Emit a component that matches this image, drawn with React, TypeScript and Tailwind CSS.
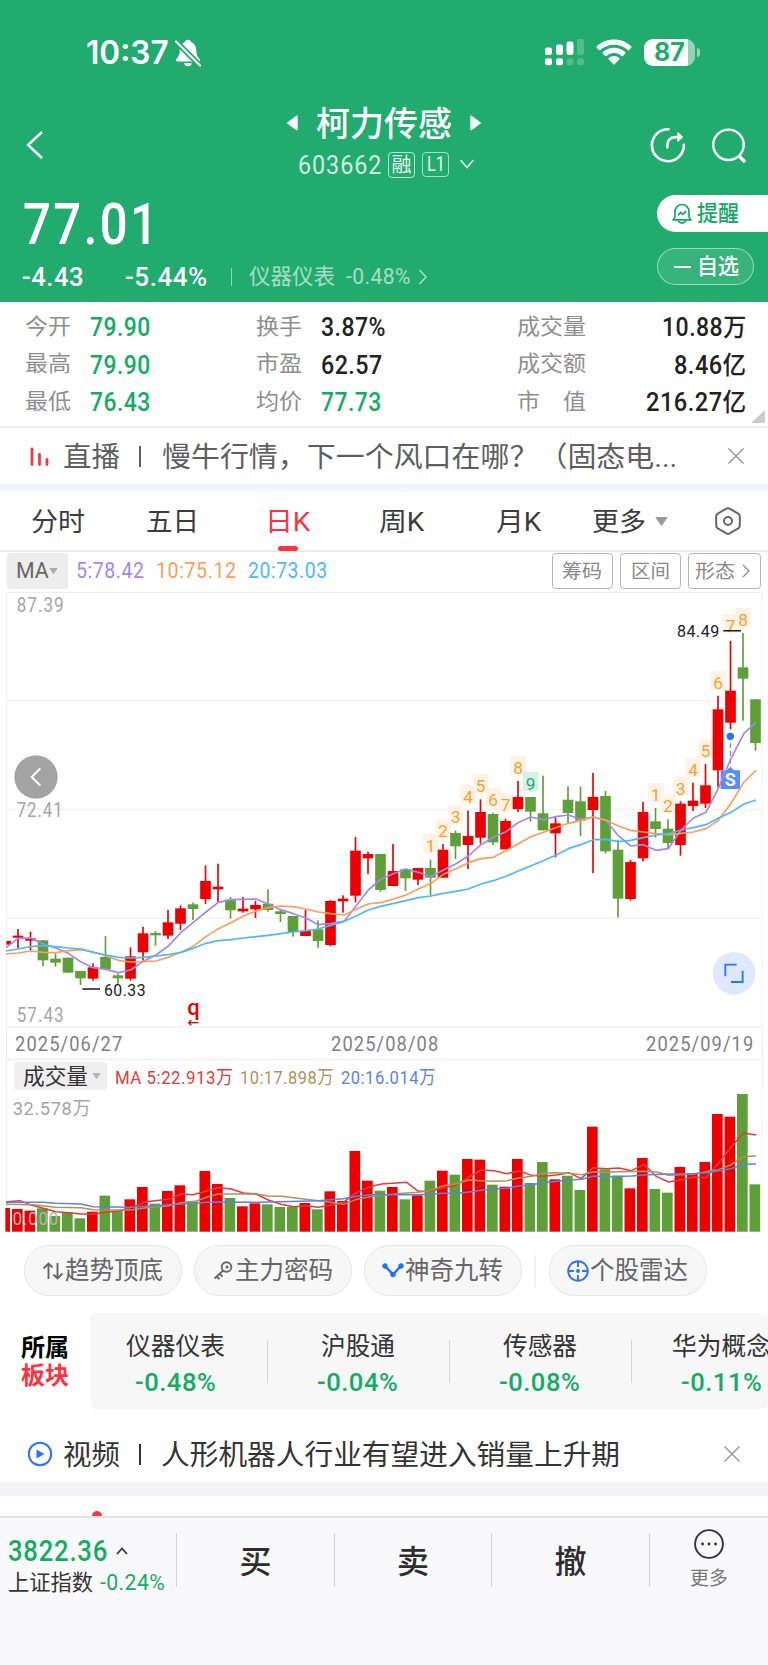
import { useLayoutEffect, useRef, type ReactNode } from "react";
import clsx from "clsx";

/* Text that is stretched or squeezed to the width given by its w-* class. */
function Fit({ className, children }: { className: string; children: ReactNode }) {
  const outer = useRef<HTMLSpanElement>(null);
  const inner = useRef<HTMLSpanElement>(null);
  useLayoutEffect(() => {
    const fit = () => {
      if (!outer.current || !inner.current) return;
      const natural = inner.current.offsetWidth;
      if (natural > 0) inner.current.style.transform = `scaleX(${outer.current.clientWidth / natural})`;
    };
    fit();
    document.fonts?.ready.then(fit);
  }, []);
  return (
    <span ref={outer} className={clsx("block shrink-0 whitespace-nowrap leading-none", className)}>
      <span ref={inner} className="inline-block origin-left">
        {children}
      </span>
    </span>
  );
}

/* [rising, high, bodyTop, bodyBottom, low, volumeTop], three units to a pixel */
type Candle = [0 | 1, number, number, number, number, number];
const candles: Candle[] = [
  [1, 1053, 1053, 1064, 1064, 564], [1, 1017, 1037, 1043, 1075, 567], [1, 1025, 1045, 1052, 1080, 572],
  [0, 1051, 1051, 1111, 1129, 565], [0, 1090, 1106, 1118, 1130, 588], [0, 1103, 1103, 1148, 1148, 577],
  [0, 1143, 1143, 1165, 1185, 595], [1, 1120, 1132, 1166, 1172, 575], [0, 1038, 1101, 1138, 1138, 527],
  [0, 1150, 1156, 1165, 1182, 572], [1, 1072, 1099, 1166, 1172, 538], [1, 1010, 1030, 1087, 1112, 501],
  [0, 1023, 1029, 1036, 1067, 551], [1, 960, 997, 1037, 1047, 513], [1, 946, 955, 1001, 1020, 496],
  [0, 938, 943, 957, 990, 544], [1, 826, 873, 927, 942, 453], [1, 821, 890, 898, 937, 492],
  [0, 921, 929, 961, 986, 534], [1, 921, 956, 964, 968, 559], [1, 933, 945, 958, 984, 550],
  [0, 898, 941, 960, 965, 553], [0, 958, 964, 972, 996, 561], [0, 978, 978, 1026, 1040, 561],
  [1, 960, 1022, 1038, 1038, 549], [0, 991, 1018, 1053, 1073, 568], [1, 930, 933, 1065, 1069, 514],
  [1, 916, 926, 934, 968, 543], [1, 741, 782, 917, 937, 393], [1, 785, 792, 805, 852, 482],
  [0, 792, 792, 900, 905, 512], [1, 762, 843, 888, 888, 501], [0, 835, 838, 865, 903, 538],
  [1, 834, 834, 869, 885, 526], [0, 809, 834, 863, 916, 482], [1, 762, 779, 863, 863, 452],
  [0, 722, 729, 769, 807, 464], [1, 662, 738, 765, 837, 417], [1, 628, 666, 743, 761, 419],
  [0, 668, 672, 757, 765, 494], [1, 686, 693, 778, 778, 500], [1, 573, 621, 657, 666, 417],
  [0, 621, 621, 665, 695, 489], [0, 557, 670, 721, 721, 426], [1, 682, 700, 730, 802, 478],
  [0, 589, 629, 669, 700, 467], [0, 590, 634, 692, 738, 510], [1, 549, 621, 660, 849, 320],
  [0, 603, 618, 784, 790, 448], [0, 749, 779, 926, 982, 467], [1, 809, 816, 927, 932, 505],
  [1, 636, 666, 805, 814, 414], [0, 654, 694, 717, 743, 507], [0, 688, 716, 759, 775, 518],
  [1, 634, 641, 765, 797, 441], [1, 578, 632, 648, 663, 460], [1, 522, 586, 641, 654, 426],
  [1, 317, 358, 541, 592, 282], [1, 153, 302, 398, 418, 290], [0, 129, 232, 266, 392, 222],
  [0, 328, 328, 459, 482, 493],
];
const cx = (i: number) => 54 + 37.5 * (i - 1);

const ma5 =
  "18,1073 54,1045 92,1044 130,1062 167,1074 205,1090 243,1116 280,1133 318,1138 355,1148 392,1140 430,1114 468,1095 505,1068 543,1027 580,997 618,966 655,937 693,929 730,928 768,927 804,942 842,959 880,971 918,984 955,1004 992,1001 1033,993 1068,948 1105,900 1142,868 1180,851 1218,837 1255,847 1293,860 1330,840 1367,822 1405,798 1443,764 1480,742 1518,725 1554,698 1592,681 1630,690 1667,680 1705,675 1742,688 1780,681 1818,692 1855,737 1892,768 1930,764 1968,781 2005,776 2043,720 2080,684 2118,667 2155,595 2193,505 2232,430 2268,397";
const ma10 =
  "18,1092 54,1089 92,1083 130,1087 167,1088 205,1082 243,1079 280,1086 318,1098 355,1111 392,1116 430,1115 468,1113 505,1102 543,1087 580,1069 618,1040 655,1016 693,998 730,978 768,963 804,953 842,948 880,950 918,957 955,966 992,971 1033,975 1068,958 1105,942 1146,937 1180,927 1218,915 1255,897 1293,880 1330,853 1367,837 1405,818 1443,806 1480,802 1518,782 1554,762 1592,740 1630,727 1667,713 1705,700 1742,692 1780,681 1818,690 1855,708 1892,721 1930,726 1968,731 2005,734 2043,730 2080,726 2118,716 2155,691 2193,640 2232,576 2268,541";
const ma20 =
  "18,1083 54,1077 92,1070 130,1067 167,1070 205,1074 243,1077 280,1087 318,1095 355,1102 392,1104 430,1102 468,1098 505,1094 543,1087 580,1075 618,1060 655,1052 693,1049 730,1044 804,1036 842,1031 880,1026 918,1022 955,1017 992,1006 1033,994 1068,978 1105,960 1142,949 1218,932 1255,923 1293,918 1330,910 1367,904 1405,897 1443,882 1480,872 1518,859 1560,841 1592,828 1630,812 1667,796 1705,776 1742,764 1780,749 1818,748 1855,755 1892,751 1930,743 1968,735 2005,731 2043,720 2080,713 2118,704 2155,685 2193,667 2232,642 2268,630";
const vol5 =
  "18,545 60,542 90,554 130,565 167,575 205,578 243,582 280,582 318,577 355,573 392,563 440,545 505,538 543,522 580,524 618,514 655,503 693,507 730,519 768,522 805,540 843,553 880,560 918,557 955,562 990,556 1030,547 1070,517 1110,500 1145,492 1220,487 1255,514 1290,514 1330,503 1368,496 1405,472 1443,450 1482,452 1520,461 1558,453 1595,466 1630,469 1670,465 1707,458 1743,476 1780,443 1820,446 1857,444 1894,452 1932,433 1970,470 2006,486 2043,480 2080,471 2118,473 2155,430 2192,383 2230,339 2268,345";
const vol10 =
  "18,553 100,554 167,562 243,563 280,569 392,570 440,563 505,558 543,548 590,543 618,532 655,522 768,522 805,528 843,529 918,538 955,542 990,547 1030,553 1070,538 1110,530 1145,526 1210,520 1255,517 1290,512 1330,497 1370,491 1407,480 1445,482 1482,484 1520,482 1555,474 1595,469 1630,460 1665,458 1707,460 1745,464 1782,455 1820,457 1857,455 1930,454 1970,456 2006,466 2043,464 2080,463 2118,455 2155,449 2192,435 2230,410 2268,408";
const vol20 =
  "18,547 130,547 167,550 243,552 280,560 392,562 440,559 505,554 590,550 618,547 655,546 768,547 843,545 955,542 990,539 1030,536 1070,529 1110,524 1255,524 1290,523 1330,520 1380,519 1407,516 1445,511 1482,507 1520,505 1555,498 1595,494 1630,488 1707,480 1745,478 1782,468 1820,470 1895,468 1930,465 2006,462 2080,461 2118,458 2155,453 2192,446 2230,433 2268,432";

/* [candle, digit, centre] */
const counts: [number, string, number][] = [
  [34, "1", 769], [35, "2", 724], [36, "3", 682], [37, "4", 622], [38, "5", 588], [39, "6", 630],
  [40, "7", 645], [41, "8", 534], [42, "9", 582], [52, "1", 616], [53, "2", 649], [54, "3", 596],
  [55, "4", 540], [56, "5", 484], [57, "6", 279], [58, "7", 109], [59, "8", 91],
];

const RED = "#ec0000";
const GREEN = "#5f9f3a";

function PriceChart() {
  return (
    <svg viewBox="0 0 2304 1317" className="block h-[439px] w-[768px]" fontFamily="Roboto">
      <g stroke="#ececec" strokeWidth="3" fill="none">
        <path d="M18 7H2286M18 331H2286M18 658H2286M18 985H2286M18 1311H2286" />
        <path d="M19 7V1317M2286 7V1317" stroke="#f1f1f1" />
      </g>
      <g fill="#a5a5a5" fontSize="58" letterSpacing="3.5">
        <text x="50" y="66" textLength="144" lengthAdjust="spacingAndGlyphs">87.39</text>
        <text x="50" y="681" textLength="141" lengthAdjust="spacingAndGlyphs">72.41</text>
        <text x="50" y="1297" textLength="144" lengthAdjust="spacingAndGlyphs">57.43</text>
      </g>
      {counts.map(([i, d, y]) => (
        <path
          key={i}
          d={`M${cx(i) - 23} ${y - 37}h47v57h-17l-7 7l-7 -7h-16z`}
          fill={d === "9" ? "#d4f1e4" : "#fef3e6"}
        />
      ))}
      {candles.map(([up, hi, top, bottom, lo], i) => {
        const x = cx(i);
        return i === 0 ? (
          <rect key={i} x="19" y={top} width="14" height={bottom - top} fill={RED} />
        ) : (
          <g key={i} fill={up ? RED : GREEN}>
            <rect x={x - 2.5} y={hi} width="5" height={lo - hi} />
            <rect x={x - 16} y={top} width="32" height={bottom - top} />
          </g>
        );
      })}
      <path d="M2191 460V530" stroke="#4a86f7" strokeWidth="3.5" strokeDasharray="14 9" />
      <circle cx="2191" cy="439" r="11" fill="#2271fb" />
      <path d="M2162 541h19l10-11l10 11h19v56h-58z" fill="#548ef8" />
      <g fill="none" strokeWidth="5" strokeLinejoin="round">
        <polyline points={ma5} stroke="#a287ee" />
        <polyline points={ma10} stroke="#fc9d5c" />
        <polyline points={ma20} stroke="#4cb9fb" />
      </g>
      <text x="2191" y="588" textAnchor="middle" fontSize="54" fontWeight="700" fill="#fff">S</text>
      <g fontSize="52" textAnchor="middle">
        {counts.map(([i, d, y]) => (
          <text key={i} x={cx(i)} y={y + 18} fill={d === "9" ? "#1cad69" : "#f9a12c"}>
            {d}
          </text>
        ))}
      </g>
      <g fill="#1b1b1b" fontSize="52" letterSpacing="1.5">
        <text x="312" y="1218" textLength="126" lengthAdjust="spacingAndGlyphs">60.33</text>
        <text x="2031" y="142" textLength="128" lengthAdjust="spacingAndGlyphs">84.49</text>
      </g>
      <path d="M247 1197H300M2170 122H2223" stroke="#1b1b1b" strokeWidth="4.5" />
      <text x="562" y="1275" fontSize="66" fontWeight="500" fill={RED}>q</text>
      <path d="M596 1298H567M574 1290l-8 8l8 8" stroke={RED} strokeWidth="4" fill="none" />
      <circle cx="108" cy="561" r="65" fill="#a3a3a3" />
      <path d="M121 535L95 561L121 587" stroke="#fff" strokeWidth="6" fill="none" />
      <circle cx="2202" cy="1150" r="64" fill="#dee9ff" />
      <path d="M2210 1124H2176V1159M2228 1142V1176H2193" stroke="#2a73fa" strokeWidth="5.5" fill="none" />
    </svg>
  );
}

function VolumeChart() {
  return (
    <svg viewBox="0 210 2304 429" className="block h-[143px] w-[768px]" fontFamily="Roboto, 'Noto Sans CJK SC'">
      <path d="M19 210V636M2286 210V636" stroke="#f1f1f1" strokeWidth="3" />
      <path d="M18 635H2286" stroke="#ececec" strokeWidth="3" />
      <text x="38" y="284" fontSize="57" letterSpacing="2" fill="#a5a5a5" textLength="236" lengthAdjust="spacingAndGlyphs">32.578万</text>
      {candles.map(([up, , , , , top], i) =>
        i === 0 ? (
          <rect key={i} x="16" y={top} width="14" height={635 - top} fill={RED} />
        ) : (
          <rect key={i} x={cx(i) - 18} y={top} width="32" height={635 - top} fill={up ? RED : GREEN} />
        ),
      )}
      <g fill="none" strokeWidth="4.5" strokeLinejoin="round">
        <polyline points={vol5} stroke="#e23b3c" />
        <polyline points={vol10} stroke="#b2905a" />
        <polyline points={vol20} stroke="#5f80e4" />
      </g>
      <text x="38" y="615" fontSize="56" letterSpacing="3" fill="#b5b5b5" textLength="139" lengthAdjust="spacingAndGlyphs">0.000</text>
    </svg>
  );
}

function Caret({ className }: { className: string }) {
  return (
    <svg viewBox="0 0 12 9" className={clsx("shrink-0", className)} fill="currentColor">
      <path d="M.5 0h11a.5.5 0 0 1 .4.8L6.500 8.600a.6.6 0 0 1-1 0L.1.8A.5.5 0 0 1 .5 0z" />
    </svg>
  );
}

function Close({ className }: { className: string }) {
  return (
    <svg viewBox="0 0 16 16" className={clsx("size-4 shrink-0", className)} stroke="#999" strokeWidth="1.5">
      <path d="M.5.5l15 15M15.5.5l-15 15" />
    </svg>
  );
}

function StatusBar() {
  return (
    <div className="flex h-[104px] items-center pt-[2px]">
      <Fit className="ml-[86px] w-[83px] font-[Inter] text-[32px] font-semibold">10:37</Fit>
      <svg viewBox="0 0 26 28" className="ml-[6px] h-7 w-[26px]">
        <path d="M13 .8c1.500 0 2.600.9 3.100 2.200 3.200 1.200 4.900 4 5.100 7.800.2 5 1.100 6.800 3.500 9.300.9 1 .5 2.500-1.200 2.500H2.500c-1.700 0-2.100-1.500-1.200-2.500C3.700 17.600 4.600 15.800 4.800 10.800c.2-3.800 1.900-6.600 5.100-7.800C10.400 1.700 11.500.8 13 .8zM9 24.300h8c-.5 2-2 3-4 3s-3.500-1-4-3z" fill="#fff" />
        <path d="M-1.500 0L27 28.500" stroke="#21ab6e" strokeWidth="5.500" />
        <path d="M1 2.500L25 26.500" stroke="#fff" strokeWidth="2.100" strokeLinecap="round" />
      </svg>
      <svg viewBox="0 0 40 28" className="ml-[343px] h-7 w-10" fill="#fff">
        <rect x="1" y="8.500" width="7" height="7.500" rx="2.300" />
        <rect x="12" y="5.500" width="7" height="10.500" rx="2.300" />
        <rect x="22.500" y="2.500" width="7" height="13.500" rx="2.300" />
        <rect x="33" y="-.3" width="7" height="16.300" rx="2.300" opacity=".22" />
        <rect x="1" y="19.300" width="7" height="7" rx="2.300" />
        <rect x="12" y="19.300" width="7" height="7" rx="2.300" />
        <rect x="22.500" y="19.300" width="7" height="7" rx="2.300" opacity=".22" />
        <rect x="33" y="19.300" width="7" height="7" rx="2.300" opacity=".22" />
      </svg>
      <svg viewBox="0 0 36 26" className="mb-[2px] ml-[12px] h-[26px] w-9" fill="#fff">
        <path d="M18 .5c6.700 0 12.800 2.600 17.300 6.800.4.400.4 1 0 1.400l-2.200 2.300c-.4.400-1 .4-1.400 0C28.100 7.700 23.300 5.700 18 5.700S7.900 7.700 4.300 11c-.4.400-1 .4-1.400 0L.7 8.700c-.4-.4-.4-1 0-1.400C5.200 3.100 11.300.5 18 .5z" />
        <path d="M18 8.800c4.300 0 8.200 1.600 11.200 4.300.4.400.4 1 0 1.400L26.900 17c-.4.400-1 .4-1.400 0-2-1.800-4.600-2.900-7.500-2.900s-5.500 1.100-7.500 2.900c-.4.400-1 .4-1.400 0l-2.300-2.500c-.4-.4-.4-1 0-1.400 3-2.700 6.900-4.300 11.200-4.300z" />
        <path d="M18 17c2 0 3.900.7 5.300 2 .4.400.4 1 0 1.400l-4.600 4.800c-.4.400-1 .4-1.400 0l-4.600-4.800c-.4-.4-.4-1 0-1.400 1.400-1.300 3.300-2 5.300-2z" />
      </svg>
      <div className="mb-[2px] ml-[12px] flex h-[27px] w-[51px] items-center justify-center rounded-[9px] bg-[linear-gradient(90deg,#fff_87%,#90d5b7_87%)]">
        <Fit className="w-[31px] font-[Inter] text-[25px] font-bold text-[#21ab6e]">87</Fit>
      </div>
      <div className="mb-[2px] ml-[2px] h-[9px] w-[3px] rounded-r-full bg-white/50" />
    </div>
  );
}

function Header() {
  return (
    <header className="h-[302px] shrink-0 bg-[#21ab6e] text-white">
      <StatusBar />
      <div className="flex h-[82px] items-center">
        <svg viewBox="0 0 18 28" className="ml-[26px] h-7 w-[18px]" fill="none" stroke="#fff" strokeWidth="2.400">
          <path d="M16 1L2 14l14 13" />
        </svg>
        <div className="ml-[243px] flex w-[194px] flex-col self-stretch">
          <div className="flex h-[38px] items-center">
            <svg viewBox="0 0 11 16" className="h-4 w-[11px]" fill="#fff">
              <path d="M10.700 1.500v13c0 .9-1 1.200-1.600.6L.5 8.800a1 1 0 0 1 0-1.500L9.100.9c.6-.6 1.600-.3 1.600.6z" />
            </svg>
            <Fit className="mt-[2px] ml-[18px] w-[136px] text-[34px] font-medium">柯力传感</Fit>
            <svg viewBox="0 0 11 16" className="ml-[18px] h-4 w-[11px]" fill="#fff">
              <path d="M.3 1.500v13c0 .9 1 1.200 1.600.6l8.600-6.300a1 1 0 0 0 0-1.500L1.900.9C1.300.3.3.6.3 1.500z" />
            </svg>
          </div>
          <div className="flex h-[44px] items-center pl-[11px]">
            <Fit className="mt-[3px] w-[84px] text-[25px] tracking-[0.04em] opacity-80">603662</Fit>
            <div className="mt-[2px] ml-[6px] flex h-[26px] w-[27px] shrink-0 items-center justify-center rounded-[4px] border-[1.500px] border-white/70">
              <Fit className="w-[20px] text-[20px] opacity-90">融</Fit>
            </div>
            <div className="mt-[1px] ml-[7px] flex h-[25px] w-[27px] shrink-0 items-center justify-center rounded-[4px] border-[1.500px] border-white/60">
              <Fit className="w-[18px] text-[21px] opacity-90">L1</Fit>
            </div>
            <svg viewBox="0 0 16 10" className="ml-[10px] h-[10px] w-4 shrink-0" fill="none" stroke="#fff" strokeWidth="1.600">
              <path d="M1.500 1L8 8.500L14.500 1" opacity=".85" />
            </svg>
          </div>
        </div>
        <svg viewBox="0 0 36 36" className="ml-[169px] size-9" fill="none" stroke="#fff" strokeWidth="2.600">
          <path d="M18.500 2.200A16 16 0 1 0 33.900 17.800" strokeLinecap="round" />
          <path d="M17.300 20.500V18.500c0-5.500 3.300-8.400 8.600-8.400h3.500" strokeLinecap="round" />
          <path d="M28 6l4.200 3.900l-4.200 4z" fill="#fff" strokeWidth="1.400" strokeLinejoin="round" />
        </svg>
        <svg viewBox="0 0 36 36" className="ml-[25px] size-9" fill="none" stroke="#fff" strokeWidth="2.400">
          <circle cx="17.500" cy="17.800" r="15.200" />
          <path d="M28.500 29.500l4.500 4.500" strokeWidth="3.400" strokeLinecap="round" />
        </svg>
      </div>
      <div className="flex justify-between">
        <div className="flex flex-col">
          <div className="flex h-[75px] items-center">
            <Fit className="ml-[23px] w-[137px] text-[58px] font-medium tracking-[0.05em]">77.01</Fit>
          </div>
          <div className="flex h-[31px] items-center">
            <Fit className="ml-[22px] w-[62px] text-[26px] font-medium tracking-[0.02em]">-4.43</Fit>
            <Fit className="ml-[41px] w-[83px] text-[26px] font-medium tracking-[0.02em]">-5.44%</Fit>
            <div className="ml-[23px] h-[18px] w-px bg-white/50" />
            <Fit className="ml-[17px] w-[86px] text-[22px] opacity-60">仪器仪表</Fit>
            <Fit className="ml-[11px] w-[65px] text-[22px] tracking-[0.02em] opacity-60">-0.48%</Fit>
            <svg viewBox="0 0 10 18" className="ml-[7px] h-[16px] w-[10px]" fill="none" stroke="#fff" strokeWidth="1.600" opacity=".65">
              <path d="M1 1l7.500 8L1 17" />
            </svg>
          </div>
        </div>
        <div className="mt-[9px] flex w-[111px] flex-col gap-[16px]">
          <div className="flex h-[37px] items-center rounded-l-full bg-white text-[#14a866]">
            <svg viewBox="0 0 20 21" className="ml-[15px] h-[21px] w-5" fill="none" stroke="currentColor" strokeWidth="1.700">
              <path d="M1 16.800h18c-1.200-1-2-1.800-2-3V8.500a7 7 0 0 0-14 0v5.300c0 1.200-.8 2-2 3z" strokeLinejoin="round" />
              <path d="M6 18.200q4 3.600 8 0" />
              <path d="M6 12.300l2.700-2.800l2.300 1.800l3-3.100" />
            </svg>
            <Fit className="ml-[5px] w-[42px] text-[22px] font-medium">提醒</Fit>
          </div>
          <div className="flex h-[37px] w-[97px] items-center rounded-full border border-white/50 bg-white/10">
            <div className="ml-[16px] h-[2px] w-[17px] bg-white" />
            <Fit className="ml-[6px] w-[42px] text-[22px] font-medium">自选</Fit>
          </div>
        </div>
      </div>
    </header>
  );
}

const GREEN_TXT = "text-[#12ad63]";

function Stat({ label, labelW, value, valueClass }: { label: string; labelW: string; value: string; valueClass: string }) {
  return (
    <div className="flex h-[37.500px] items-center">
      <Fit className={clsx("text-[22px] text-[#8e8e8e]", labelW)}>{label}</Fit>
      <Fit className={clsx("mt-[2px] text-[25.500px] font-medium tracking-[0.02em]", valueClass)}>{value}</Fit>
    </div>
  );
}

function Stats() {
  return (
    <section className="flex h-[126px] shrink-0 border-b-2 border-[#f0f0f0] bg-white pt-[6px]">
      <div className="ml-[25px] w-[231px]">
        <Stat label="今开" labelW="w-[46px]" value="79.90" valueClass={clsx("ml-[19px] w-[61px]", GREEN_TXT)} />
        <Stat label="最高" labelW="w-[46px]" value="79.90" valueClass={clsx("ml-[19px] w-[61px]", GREEN_TXT)} />
        <Stat label="最低" labelW="w-[46px]" value="76.43" valueClass={clsx("ml-[19px] w-[61px]", GREEN_TXT)} />
      </div>
      <div className="w-[261px]">
        <Stat label="换手" labelW="w-[46px]" value="3.87%" valueClass="ml-[19px] w-[65px] text-[#222]" />
        <Stat label="市盈" labelW="w-[46px]" value="62.57" valueClass="ml-[19px] w-[62px] text-[#222]" />
        <Stat label="均价" labelW="w-[46px]" value="77.73" valueClass={clsx("ml-[19px] w-[61px]", GREEN_TXT)} />
      </div>
      <div className="w-[230px]">
        <Stat label="成交量" labelW="w-[69px]" value="10.88万" valueClass="ml-auto w-[85px] text-[#222]" />
        <Stat label="成交额" labelW="w-[69px]" value="8.46亿" valueClass="ml-auto w-[73px] text-[#222]" />
        <Stat label="市　值" labelW="w-[69px]" value="216.27亿" valueClass="ml-auto w-[101px] text-[#222]" />
      </div>
      <svg viewBox="0 0 14 13" className="mb-[3px] ml-[4px] h-[13px] w-[14px] self-end" fill="#ccc">
        <path d="M14 0v13H0z" />
      </svg>
    </section>
  );
}

function Tabs() {
  return (
    <nav className="flex h-[61px] shrink-0 items-center border-b-2 border-[#eaeaea] bg-white pt-[2px] text-[26px] text-[#3c3c3c]">
      <Fit className="ml-[31px] w-[54px]">分时</Fit>
      <Fit className="ml-[61px] w-[53px]">五日</Fit>
      <div className="relative -mt-[2px] ml-[66px] flex h-[61px] items-center pt-[2px] text-[#fd3440]">
        <Fit className="w-[45px]">日K</Fit>
        <span className="absolute bottom-0 left-[13px] h-[5px] w-5 rounded-[2.500px] bg-[#fd3440]" />
      </div>
      <Fit className="ml-[69px] w-[45px]">周K</Fit>
      <Fit className="ml-[72px] w-[45px]">月K</Fit>
      <Fit className="ml-[51px] w-[54px]">更多</Fit>
      <Caret className="ml-[9px] h-[9px] w-[13px] text-[#999]" />
      <svg viewBox="0 0 26 28" className="mb-[2px] ml-[47px] h-7 w-[26px]" fill="none" stroke="#666" strokeWidth="2">
        <path d="M13 1.200q.9 0 1.600.4l8.600 5q1.600 1 1.600 2.700v9.400q0 1.700-1.600 2.700l-8.600 5q-1.600.8-3.200 0l-8.600-5q-1.600-1-1.600-2.700V9.300q0-1.700 1.600-2.700l8.600-5q.7-.4 1.600-.4z" />
        <circle cx="13" cy="14" r="4" />
      </svg>
    </nav>
  );
}

function Indicators() {
  const box = "flex h-[36px] shrink-0 items-center rounded-[4px] border border-[#b5b5b5] text-[19px] text-[#888]";
  return (
    <div className="flex h-[38px] shrink-0 items-center bg-white text-[22px]">
      <div className="ml-[7px] flex h-[36px] w-[61px] items-center rounded-[3px] bg-[#ededed] text-[#666]">
        <Fit className="ml-[9px] w-[33px]">MA</Fit>
        <Caret className="ml-0 h-[6px] w-[9px] text-[#aaa]" />
      </div>
      <Fit className="ml-[8px] w-[69px] tracking-[0.03em] text-[#a287ee]">5:78.42</Fit>
      <Fit className="ml-[11px] w-[81px] tracking-[0.03em] text-[#fc9d5c]">10:75.12</Fit>
      <Fit className="ml-[11px] w-[80px] tracking-[0.03em] text-[#4cb9fb]">20:73.03</Fit>
      <div className={clsx(box, "ml-[224px] w-[61px]")}>
        <Fit className="ml-[9px] w-[40px]">筹码</Fit>
      </div>
      <div className={clsx(box, "ml-[7px] w-[61px]")}>
        <Fit className="ml-[10px] w-[39px]">区间</Fit>
      </div>
      <div className={clsx(box, "ml-[7px] w-[73px]")}>
        <Fit className="ml-[6px] w-[40px]">形态</Fit>
        <svg viewBox="0 0 8 14" className="ml-[7px] h-[14px] w-2" fill="none" stroke="#888" strokeWidth="1.200">
          <path d="M1 1l6 6l-6 6" />
        </svg>
      </div>
    </div>
  );
}

function Sector({ name, nameW, value, first }: { name: string; nameW: string; value: string; first?: boolean }) {
  return (
    <div className="flex w-[182px] shrink-0 items-center">
      <div className={clsx("h-[43px] w-px", !first && "bg-[#d5d5d5]")} />
      <div className="ml-[-2px] flex flex-1 flex-col items-center gap-[10px] pt-[7px]">
        <Fit className={clsx("text-[25px] text-[#333]", nameW)}>{name}</Fit>
        <Fit className={clsx("w-[81px] text-[26.500px] font-medium tracking-[0.02em]", GREEN_TXT)}>{value}</Fit>
      </div>
    </div>
  );
}

function Pill({ icon, children, className }: { icon: ReactNode; children: string; className: string }) {
  return (
    <div className={clsx("flex h-[51px] w-[158px] shrink-0 items-center rounded-[25px] border border-[#e6e6e6] bg-[#f7f7f7] text-[#666]", className)}>
      <span className="ml-[16px] flex w-[24px] shrink-0 justify-center">{icon}</span>
      <Fit className="w-[98px] text-[25px]">{children}</Fit>
    </div>
  );
}

function Tools() {
  return (
    <div className="flex h-[79px] shrink-0 items-center bg-white pb-[2px]">
      <Pill
        className="ml-[24px]"
        icon={
          <svg viewBox="0 0 22 18" className="h-[18px] w-[22px]" fill="none" stroke="currentColor" strokeWidth="1.900">
            <path d="M6.500 17V1.500M1.500 6.500l5-5l4 4M15.500 1v15.500M11.500 12.500l4 4l5-5" />
          </svg>
        }
      >
        趋势顶底
      </Pill>
      <Pill
        className="ml-[12px]"
        icon={
          <svg viewBox="0 0 20 19" className="h-[19px] w-5" fill="none" stroke="currentColor" strokeWidth="1.900">
            <circle cx="13.500" cy="6" r="4.800" />
            <path d="M10.200 9.500L1.500 17.500M3.500 15.500l3 2.500M6.500 12.800l3 2.800" />
            <circle cx="14" cy="6" r=".6" />
          </svg>
        }
      >
        主力密码
      </Pill>
      <Pill
        className="ml-[12px]"
        icon={
          <svg viewBox="0 0 22 15" className="h-[15px] w-[22px]" fill="#1f72ff" stroke="#1f72ff">
            <path d="M3.500 3.500L11 11.500L18.500 3.500" fill="none" strokeWidth="2.400" />
            <circle cx="3" cy="3" r="2.300" />
            <circle cx="19" cy="3" r="2.300" />
            <circle cx="11" cy="11.600" r="2.300" />
          </svg>
        }
      >
        神奇九转
      </Pill>
      <div className="ml-[13px] h-[32px] w-px bg-[#ececec]" />
      <Pill
        className="ml-[13px]"
        icon={
          <svg viewBox="0 0 22 22" className="size-[22px]" fill="none" stroke="#2b74f5" strokeWidth="1.900">
            <circle cx="11" cy="11" r="9.800" />
            <path d="M11 1v6M11 15V21M1 11h6M15 11H21" />
            <circle cx="11" cy="11" r="1" fill="#2b74f5" />
          </svg>
        }
      >
        个股雷达
      </Pill>
    </div>
  );
}

function BottomBar() {
  const sep = "h-[54px] w-px shrink-0 bg-[#d3d3d6]";
  return (
    <footer className="flex h-[149px] shrink-0 items-start border-t-2 border-[#e3e4e6] bg-[#f9f9fb] pt-[15px]">
      <div className="flex w-[176px] shrink-0 flex-col pl-[8px]">
        <div className="flex h-[36px] items-center">
          <Fit className={clsx("w-[100px] text-[29px] font-medium tracking-[0.03em]", GREEN_TXT)}>3822.36</Fit>
          <svg viewBox="0 0 12 8" className="ml-[8px] h-2 w-3" fill="none" stroke="#333" strokeWidth="1.800">
            <path d="M1 7l5-5.500L11 7" />
          </svg>
        </div>
        <div className="flex h-[28px] items-center">
          <Fit className="w-[85px] text-[21.500px] text-[#333]">上证指数</Fit>
          <Fit className={clsx("ml-[7px] w-[65px] text-[21.500px] tracking-[0.02em]", GREEN_TXT)}>-0.24%</Fit>
        </div>
      </div>
      <div className={sep} />
      <div className="flex h-[57px] w-[157px] items-center justify-center text-[#2d2d2d]">
        <Fit className="w-[32px] text-[32px] font-medium">买</Fit>
      </div>
      <div className={sep} />
      <div className="flex h-[57px] w-[156px] items-center justify-center text-[#2d2d2d]">
        <Fit className="w-[32px] text-[32px] font-medium">卖</Fit>
      </div>
      <div className={sep} />
      <div className="flex h-[57px] w-[157px] items-center justify-center text-[#2d2d2d]">
        <Fit className="w-[32px] text-[32px] font-medium">撤</Fit>
      </div>
      <div className={sep} />
      <div className="-mt-[4px] flex flex-1 flex-col items-center">
        <svg viewBox="0 0 30 30" className="size-[30px]" fill="none" stroke="#333" strokeWidth="1.900">
          <circle cx="15" cy="15" r="13.900" />
          <path d="M8.500 15h.1M15 15h.1M21.500 15h.1" strokeWidth="2.800" strokeLinecap="round" />
        </svg>
        <Fit className="mt-[10px] w-[38px] text-[19px] text-[#777]">更多</Fit>
      </div>
    </footer>
  );
}

export default function App() {
  return (
    <div className="flex h-[1665px] w-[768px] flex-col overflow-hidden bg-white font-[Roboto,'Noto_Sans_CJK_SC',sans-serif]">
      <Header />
      <Stats />
      <div className="flex h-[56px] shrink-0 items-center bg-white text-[28px] text-[#5e5e5e]">
        <svg viewBox="0 0 19 19" className="ml-[30px] h-[19px] w-[19px]" stroke="#f63640" strokeWidth="2.800" strokeLinecap="round">
          <path d="M2 2v15.500M9.500 7.500v10M17 12.500v5" />
        </svg>
        <Fit className="mt-[4px] ml-[14px] w-[57px]">直播</Fit>
        <div className="ml-[19px] h-[21px] w-[2px] bg-[#5e5e5e]" />
        <Fit className="mt-[4px] ml-[21px] w-[515px]">慢牛行情，下一个风口在哪？（固态电...</Fit>
        <Close className="ml-[51px]" />
      </div>
      <div className="h-[7px] shrink-0 bg-[#f2f4f9]" />
      <Tabs />
      <Indicators />
      <div className="h-[439px] shrink-0">
        <PriceChart />
      </div>
      <div className="ml-[6px] flex h-[31px] w-[757px] shrink-0 items-center justify-between border-x border-b border-[#ececec] px-[8px] text-[21px] tracking-[0.06em] text-[#808080]">
        <Fit className="w-[108px]">2025/06/27</Fit>
        <Fit className="w-[108px]">2025/08/08</Fit>
        <Fit className="w-[108px]">2025/09/19</Fit>
      </div>
      <div className="ml-[6px] flex h-[30px] w-[757px] shrink-0 items-end border-x border-[#f1f1f1] text-[19px] tracking-[0.03em]">
        <div className="ml-[7px] flex h-[28px] w-[93px] items-center rounded-[3px] bg-[#efefef]">
          <Fit className="mt-[2px] ml-[9px] w-[65px] text-[22px] tracking-normal text-[#333]">成交量</Fit>
          <Caret className="ml-[4px] h-[6px] w-[9px] text-[#b5b5b5]" />
        </div>
        <Fit className="mb-[3px] ml-[8px] w-[118px] text-[#e23b3c]">MA 5:22.913万</Fit>
        <Fit className="mb-[3px] ml-[7px] w-[94px] text-[#b2905a]">10:17.898万</Fit>
        <Fit className="mb-[3px] ml-[7px] w-[95px] text-[#5f80e4]">20:16.014万</Fit>
      </div>
      <div className="h-[142px] shrink-0">
        <VolumeChart />
      </div>
      <Tools />
      <section className="mt-[2px] flex h-[96px] shrink-0">
        <div className="flex w-[90px] flex-col items-center justify-center gap-[4px] pt-[1px] text-[24px] font-bold">
          <Fit className="w-[48px] text-black">所属</Fit>
          <Fit className="w-[48px] text-[#fd3440]">板块</Fit>
        </div>
        <div className="flex flex-1 overflow-hidden rounded-[6px] bg-[#f7f7f7]">
          <div className="-ml-[5px] flex">
            <Sector first name="仪器仪表" nameW="w-[99px]" value="-0.48%" />
            <Sector name="沪股通" nameW="w-[74px]" value="-0.04%" />
            <Sector name="传感器" nameW="w-[74px]" value="-0.08%" />
            <Sector name="华为概念" nameW="w-[99px]" value="-0.11%" />
          </div>
        </div>
      </section>
      <div className="mt-[17px] flex h-[56px] shrink-0 items-center text-[28px] text-[#333]">
        <svg viewBox="0 0 26 26" className="ml-[27px] size-[26px]" fill="none" stroke="#2b74f5" strokeWidth="2">
          <circle cx="13" cy="13" r="11.200" />
          <path d="M9.500 8.500v9l8-4.500z" fill="#2b74f5" stroke="none" />
        </svg>
        <Fit className="mt-[4px] ml-[10px] w-[57px]">视频</Fit>
        <div className="ml-[19px] h-[21px] w-[2px] bg-[#333]" />
        <Fit className="mt-[4px] ml-[20px] w-[459px]">人形机器人行业有望进入销量上升期</Fit>
        <Close className="ml-[104px]" />
      </div>
      <div className="h-[14px] shrink-0 bg-[#f2f4f8]" />
      <div className="h-[20px] shrink-0 overflow-hidden bg-white">
        <div className="mt-[15px] ml-[92px] size-[10px] rounded-full bg-[#f63640]" />
      </div>
      <BottomBar />
    </div>
  );
}
